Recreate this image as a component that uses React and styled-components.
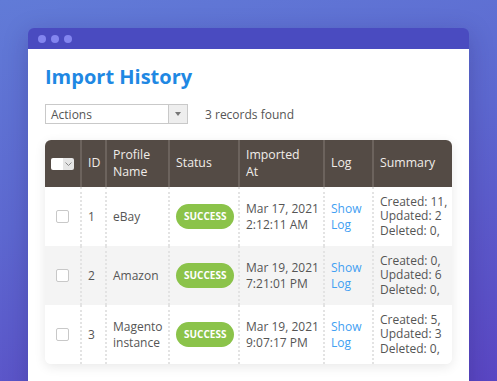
import React from "react";
import styled, { createGlobalStyle } from "styled-components";

const rows = [
  { id: 1, name: "eBay", date: "Mar 17, 2021", time: "2:12:11 AM", created: 11, updated: 2 },
  { id: 2, name: "Amazon", date: "Mar 19, 2021", time: "7:21:01 PM", created: 0, updated: 6 },
  { id: 3, name: "Magento instance", date: "Mar 19, 2021", time: "9:07:17 PM", created: 5, updated: 3 },
];

const COLS = "35px 25px 63px 70px 85px 49px 80px";

export default function App() {
  return (
    <>
      <GlobalStyle />
      <Page>
        <Window>
          <TitleBar>
            <Dot />
            <Dot />
            <Dot />
          </TitleBar>

          <Panel>
            <Title>Import History</Title>

            <Toolbar>
              <Select>
                <span>Actions</span>
                <SelectArrow>
                  <svg width="6" height="4" viewBox="0 0 6 4">
                    <path d="M0 0h6L3 4z" fill="#777" />
                  </svg>
                </SelectArrow>
              </Select>
              <Count>3 records found</Count>
            </Toolbar>

            <Card>
              <HeadRow>
                <Th center>
                  <BulkCheck>
                    <span className="box" />
                    <span className="drop">
                      <svg width="7" height="4" viewBox="0 0 7 4">
                        <path d="M0.5 0.5L3.5 3.5L6.5 0.5" fill="none" stroke="#888" strokeWidth="1" />
                      </svg>
                    </span>
                  </BulkCheck>
                </Th>
                <Th>ID</Th>
                <Th>Profile Name</Th>
                <Th>Status</Th>
                <Th>
                  Imported
                  <br />
                  At
                </Th>
                <Th>Log</Th>
                <Th>Summary</Th>
              </HeadRow>

              {rows.map((r, i) => (
                <Row key={r.id} striped={i % 2 === 1}>
                  <Td center>
                    <Check />
                  </Td>
                  <Td>{r.id}</Td>
                  <Td>{r.name}</Td>
                  <Td>
                    <Badge>Success</Badge>
                  </Td>
                  <Td>
                    {r.date}
                    <br />
                    {r.time}
                  </Td>
                  <Td>
                    <LogLink href="#">Show Log</LogLink>
                  </Td>
                  <Td>
                    <Summary>
                      Created: {r.created},<br />
                      Updated: {r.updated}
                      <br />
                      Deleted: 0,
                    </Summary>
                  </Td>
                </Row>
              ))}
            </Card>
          </Panel>
        </Window>
      </Page>
    </>
  );
}

const GlobalStyle = createGlobalStyle`
  html, body {
    margin: 0;
    padding: 0;
    height: 100%;
    overflow: hidden;
  }
  body {
    font-family: "Open Sans", "Noto Sans", sans-serif;
  }
  * { box-sizing: border-box; }
`;

const Page = styled.div`
  height: 100vh;
  padding: 28px 28px 0;
  background: linear-gradient(165deg, #617bd7 0%, #5d68d0 45%, #5a46c3 100%);
  overflow: hidden;
`;

const Window = styled.div`
  width: 441px;
  height: 420px;
  border-radius: 6px 6px 0 0;
  overflow: hidden;
  box-shadow: 0 6px 24px rgba(30, 20, 90, 0.25);
  display: flex;
  flex-direction: column;
`;

const TitleBar = styled.div`
  height: 21px;
  background: #4a4bc0;
  display: flex;
  align-items: center;
  gap: 5px;
  padding-left: 10px;
`;

const Dot = styled.span`
  width: 8px;
  height: 8px;
  border-radius: 50%;
  background: #8385ef;
`;

const Panel = styled.div`
  flex: 1;
  background: #fff;
  padding: 14px 17px 0;
`;

const Title = styled.h1`
  margin: 0;
  font-size: 20px;
  line-height: 27px;
  font-weight: 700;
  color: #1f88e3;
`;

const Toolbar = styled.div`
  display: flex;
  align-items: center;
  gap: 17px;
  margin-top: 14px;
`;

const Select = styled.div`
  width: 143px;
  height: 20px;
  border: 1px solid #c9c9c9;
  display: flex;
  align-items: center;
  justify-content: space-between;
  font-size: 12px;
  color: #555;
  span {
    padding-left: 5px;
  }
`;

const SelectArrow = styled.div`
  width: 19px;
  height: 100%;
  border-left: 1px solid #c9c9c9;
  background: #eeeeee;
  display: flex;
  align-items: center;
  justify-content: center;
`;

const Count = styled.span`
  font-size: 12px;
  color: #555;
`;

const Card = styled.div`
  margin-top: 16px;
  width: 407px;
  border-radius: 6px;
  overflow: hidden;
  background: #fff;
  box-shadow: 0 3px 12px rgba(0, 0, 0, 0.09);
`;

const HeadRow = styled.div`
  display: grid;
  grid-template-columns: ${COLS};
  height: 47px;
  background: #544b45;
`;

const Th = styled.div`
  display: flex;
  align-items: center;
  justify-content: ${(p) => (p.center ? "center" : "flex-start")};
  padding: 0 6px;
  font-size: 12.3px;
  line-height: 16.5px;
  color: #f1ede9;
  & + & {
    border-left: 2px solid #6c635d;
  }
`;

const BulkCheck = styled.div`
  display: flex;
  height: 12px;
  border-radius: 2px;
  overflow: hidden;
  .box {
    width: 13px;
    background: #fff;
  }
  .drop {
    width: 12px;
    background: #e6e6e6;
    display: flex;
    align-items: center;
    justify-content: center;
  }
`;

const Row = styled.div`
  display: grid;
  grid-template-columns: ${COLS};
  height: 59px;
  background: ${(p) => (p.striped ? "#f4f4f4" : "#fff")};
`;

const Td = styled.div`
  display: flex;
  align-items: center;
  justify-content: ${(p) => (p.center ? "center" : "flex-start")};
  padding: 0 6px;
  font-size: 12px;
  line-height: 16px;
  color: #555;
  white-space: nowrap;
  overflow: hidden;
  & + & {
    border-left: 2px dotted #e3e3e3;
  }
  &:nth-child(3) {
    white-space: normal;
  }
`;

const Check = styled.span`
  width: 13px;
  height: 13px;
  border: 1px solid #c8c8c8;
  border-radius: 2px;
  background: #fff;
`;

const Badge = styled.span`
  display: inline-block;
  padding: 6px 8px;
  border-radius: 13px;
  background: #8bc34a;
  color: #fff;
  font-size: 10px;
  line-height: 13px;
  font-weight: 700;
  text-transform: uppercase;
`;

const LogLink = styled.a`
  color: #42a0f2;
  text-decoration: none;
  white-space: normal;
  width: 30px;
`;

const Summary = styled.div`
  line-height: 14.5px;
`;
